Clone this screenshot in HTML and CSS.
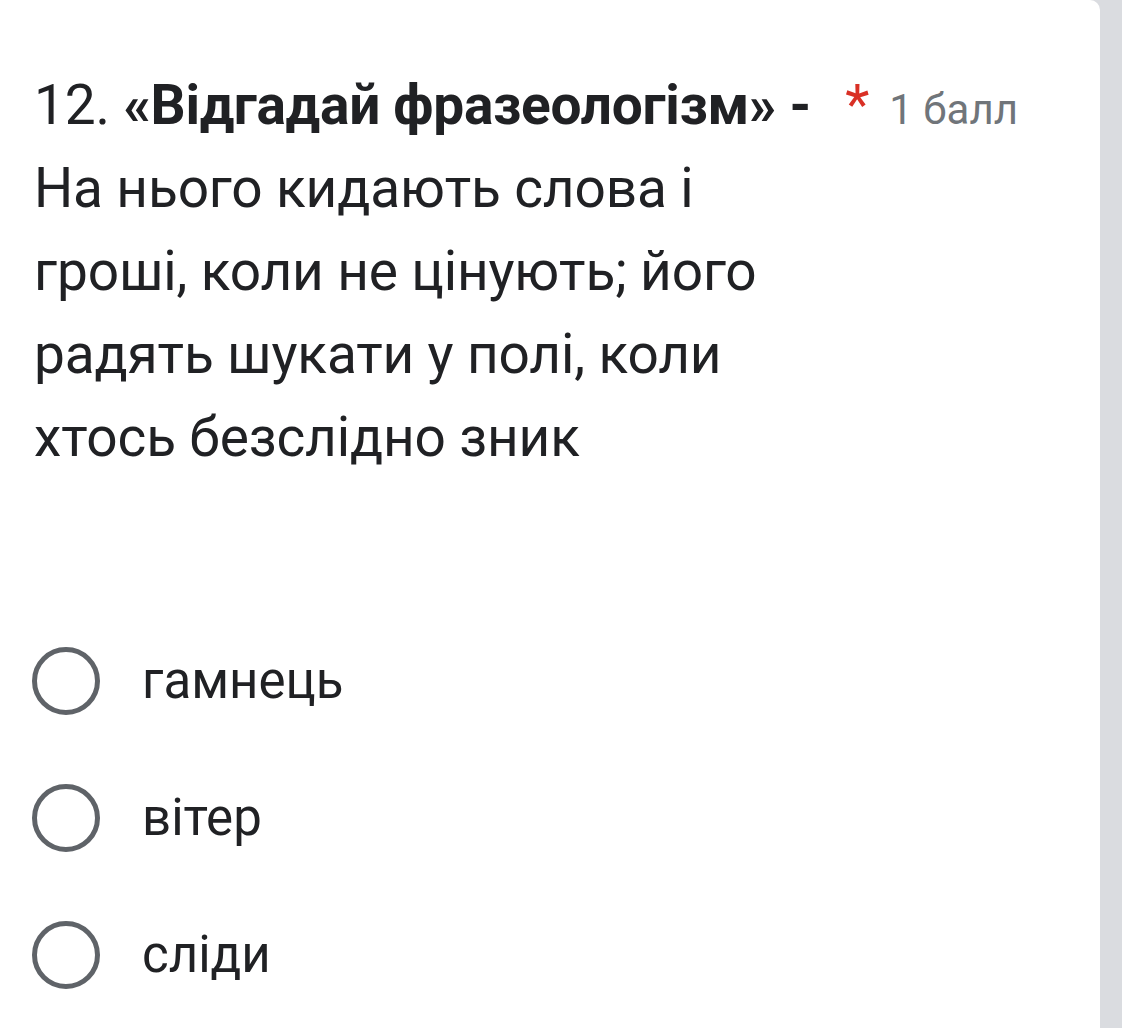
FILE: index.html
```html
<!DOCTYPE html>
<html lang="uk">
<head>
<meta charset="utf-8">
<title>Питання 12</title>
<link rel="stylesheet" href="styles.css">
</head>
<body>
<div class="card">
  <div class="header">
    <div class="title"><span>12. </span><span class="bold">«Відгадай фразеологізм» -</span><br>На нього кидають слова і гроші, коли не цінують; його радять шукати у полі, коли хтось безслідно зник</div>
    <span class="star">*</span>
    <span class="points">1 балл</span>
  </div>
  <div class="options">
    <label class="option"><span class="radio"></span><span class="label">гамнець</span></label>
    <label class="option"><span class="radio"></span><span class="label">вітер</span></label>
    <label class="option"><span class="radio"></span><span class="label">сліди</span></label>
  </div>
</div>
</body>
</html>
```
FILE: styles.css
```css
html, body {
  margin: 0;
  padding: 0;
}
body {
  background: #dadce0;
  font-family: Roboto, "Noto Sans", Arial, sans-serif;
  color: #202124;
  width: 1122px;
  height: 1028px;
  overflow: hidden;
}
.card {
  background: #ffffff;
  margin-right: 22px;
  border-top-right-radius: 10px;
  height: 1028px;
  box-sizing: border-box;
  padding: 64px 0 0 34px;
}
.header {
  display: flex;
  align-items: baseline;
  padding-right: 82px;
}
.title {
  flex: 1 1 auto;
  font-size: 55px;
  line-height: 83px;
  font-weight: 400;
  letter-spacing: -0.15px;
}
.bold {
  font-weight: 700;
  letter-spacing: -0.3px;
}
.star {
  color: #d93025;
  font-size: 56px;
  line-height: 83px;
  margin-left: 14px;
}
.points {
  color: #70757a;
  font-size: 42px;
  margin-left: 20px;
  white-space: nowrap;
}
.options {
  margin-top: 133px;
  display: flex;
  flex-direction: column;
}
.option {
  display: flex;
  align-items: center;
  height: 137px;
}
.radio {
  width: 58px;
  height: 58px;
  border: 5.5px solid #5f6368;
  border-radius: 50%;
  margin-left: -2px;
  flex: none;
}
.label {
  font-size: 51px;
  margin-left: 42px;
}
```
